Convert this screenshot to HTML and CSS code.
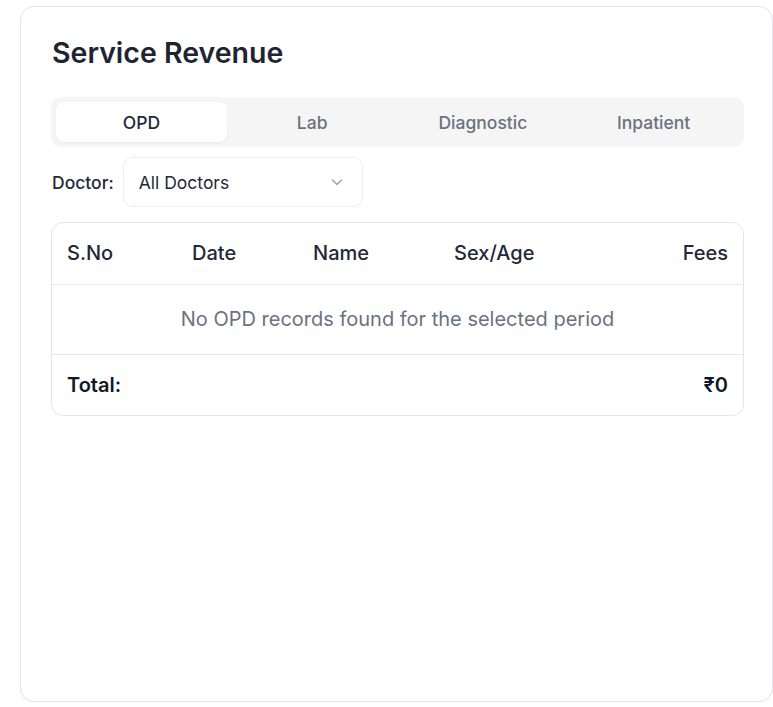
FILE: index.html
```html
<!DOCTYPE html>
<html lang="en">
<head>
<meta charset="utf-8">
<title>Service Revenue</title>
<link rel="stylesheet" href="styles.css">
</head>
<body>
<div class="page">
  <section class="card">
    <h1 class="title">Service Revenue</h1>
    <div class="tabs">
      <button class="tab active">OPD</button>
      <button class="tab">Lab</button>
      <button class="tab">Diagnostic</button>
      <button class="tab">Inpatient</button>
    </div>
    <div class="filter">
      <label class="filter-label">Doctor:</label>
      <div class="select">
        <span>All Doctors</span>
        <svg class="chev" width="16" height="16" viewBox="0 0 16 16" fill="none" stroke="#9ca3af" stroke-width="1.5" stroke-linecap="round" stroke-linejoin="round"><path d="M3.5 6l4.5 4.5 4.5-4.5"/></svg>
      </div>
    </div>
    <div class="table">
      <div class="row head">
        <div class="c c1">S.No</div>
        <div class="c c2">Date</div>
        <div class="c c3">Name</div>
        <div class="c c4">Sex/Age</div>
        <div class="c c5">Fees</div>
      </div>
      <div class="empty">No OPD records found for the selected period</div>
      <div class="row total">
        <div class="tl">Total:</div>
        <div class="tv">₹0</div>
      </div>
    </div>
  </section>
</div>
</body>
</html>
```
FILE: styles.css
```css
* { box-sizing: border-box; }
html, body { margin: 0; padding: 0; background: #ffffff; }
body { font-family: Inter, "Noto Sans", sans-serif; color: #1f2937; }
.page { padding: 6px 0 0 20px; }
.card {
  width: 753px;
  height: 696px;
  border: 1px solid #e2e5ea;
  border-radius: 14px;
  padding: 29px 28px 0 30px;
  background: #fff;
  box-shadow: 0 1px 2px rgba(0,0,0,0.04);
}
.title {
  margin: 0;
  font-size: 28.5px;
  font-weight: 600;
  line-height: 34px;
  color: #1e2530;
  padding-left: 1px;
}
.tabs {
  margin-top: 27px;
  display: grid;
  grid-template-columns: repeat(4, 1fr);
  background: #f5f5f5;
  border-radius: 10px;
  padding: 5px;
  height: 50px;
}
.tab {
  border: 0;
  background: transparent;
  font-family: inherit;
  font-size: 17.5px;
  font-weight: 500;
  color: #6b7280;
  border-radius: 8px;
  cursor: pointer;
}
.tab.active {
  background: #fff;
  color: #1f2937;
  box-shadow: 0 1px 2px rgba(0,0,0,0.05);
}
.filter {
  margin-top: 10px;
  display: flex;
  align-items: center;
  gap: 9px;
}
.filter-label { font-size: 17.5px; font-weight: 500; color: #1f2937; padding-left: 1px; }
.select {
  width: 240px;
  height: 50px;
  border: 1px solid #eceef1;
  border-radius: 10px;
  display: flex;
  align-items: center;
  justify-content: space-between;
  padding: 0 17px 0 15px;
  font-size: 17.5px;
  color: #1f2937;
}
.chev { display: block; }
.table {
  margin-top: 15px;
  border: 1px solid #e2e5ea;
  border-radius: 12px;
  overflow: hidden;
}
.row { display: flex; align-items: center; padding: 0 15px; }
.head { height: 62px; padding-bottom: 2px; border-bottom: 1px solid #e5e7eb; font-size: 20px; font-weight: 500; color: #1f2937; }
.c1 { width: 125px; }
.c2 { width: 121px; }
.c3 { width: 141px; }
.c4 { flex: 1; }
.c5 { text-align: right; }
.empty {
  height: 70px;
  padding-bottom: 2px;
  border-bottom: 1px solid #e5e7eb;
  display: flex; align-items: center; justify-content: center;
  font-size: 20px; color: #6b7280;
}
.total { height: 60px; justify-content: space-between; font-size: 20px; font-weight: 600; color: #111827; }
```
